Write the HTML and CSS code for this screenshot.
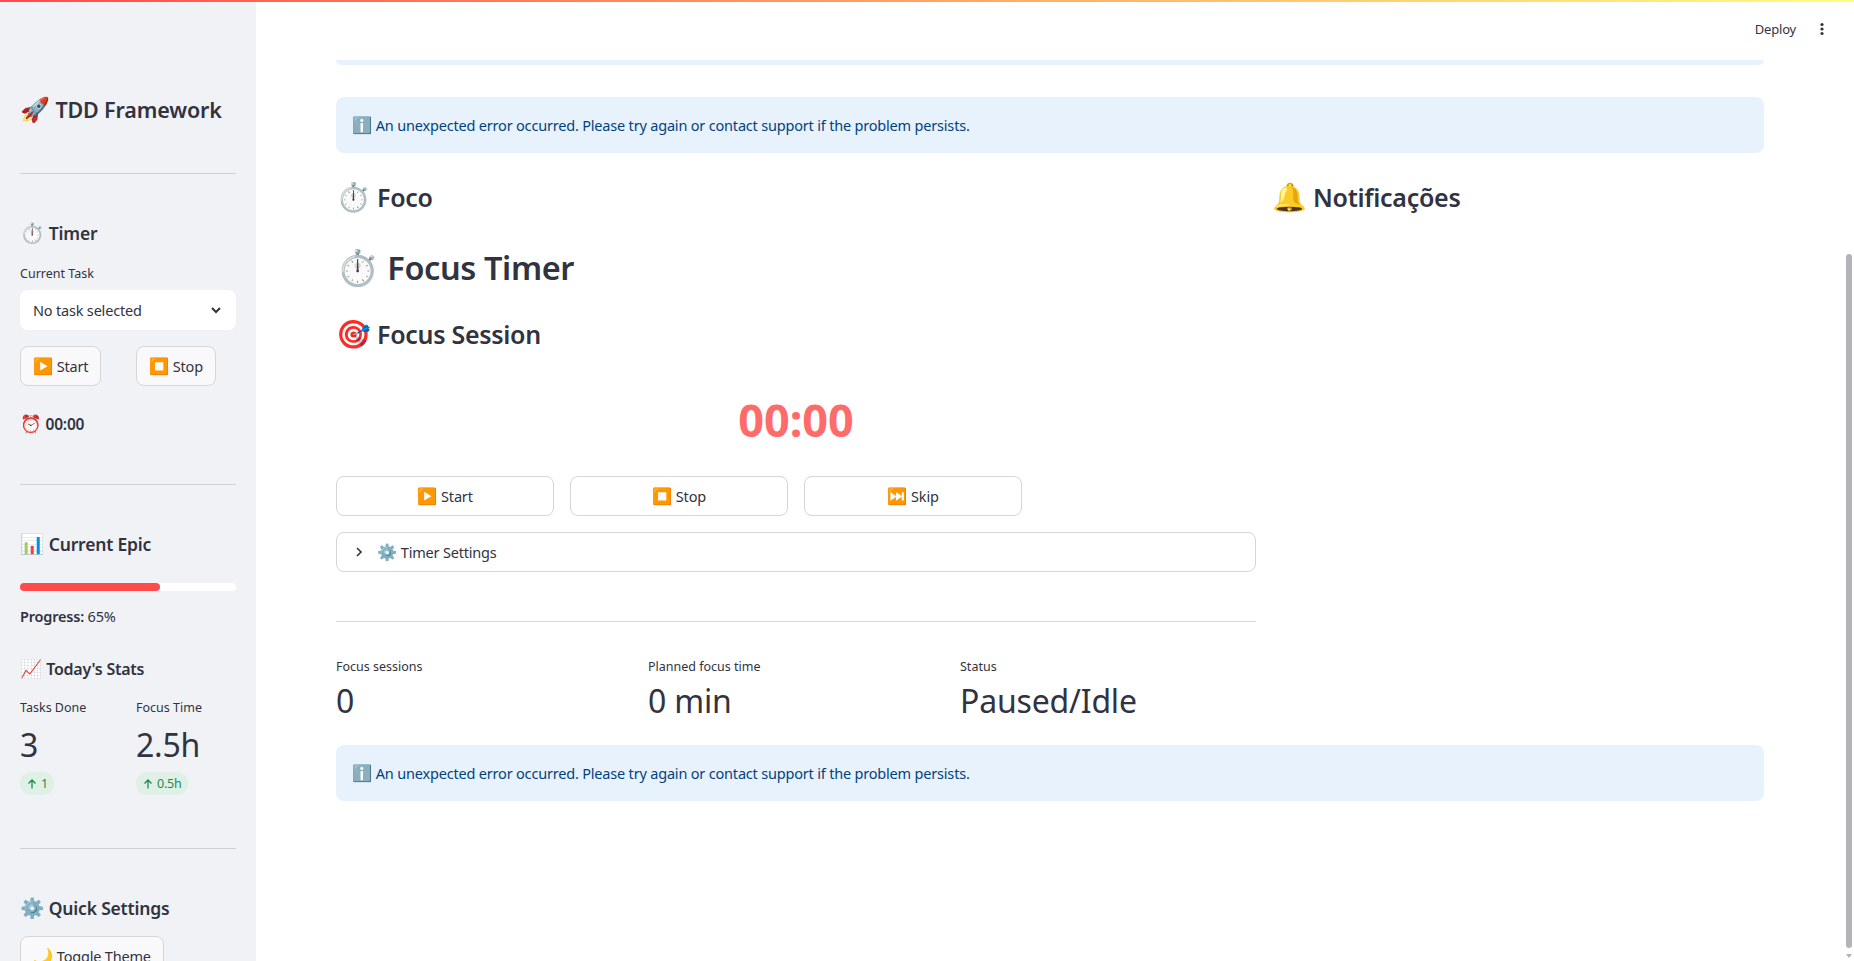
FILE: index.html
```html
<!DOCTYPE html>
<html lang="en">

<head>
  <meta charset="UTF-8" />
  <title>TDD Framework</title>
  <link rel="stylesheet" href="styles.css">
</head>

<body>
  <div class="top-bar"></div>

  <div class="app">
    <aside class="sidebar">
      <h1 class="brand"><span class="emoji">🚀</span> TDD Framework</h1>
      <hr class="rule rule-brand">

      <h3 class="side-title"><span class="emoji">⏱️</span> Timer</h3>
      <div class="field-label">Current Task</div>
      <div class="select">
        <span>No task selected</span>
        <svg class="chevron" width="16" height="16" viewBox="0 0 16 16"><path d="M4 6l4 4 4-4" fill="none" stroke="#31333f" stroke-width="2"/></svg>
      </div>
      <div class="side-buttons">
        <div class="side-col"><button class="btn btn-side"><span class="emoji">▶️</span> Start</button></div>
        <div class="side-col"><button class="btn btn-side"><span class="emoji">⏹️</span> Stop</button></div>
      </div>
      <div class="clock"><span class="emoji">⏰</span> 00:00</div>
      <hr class="rule rule-clock">

      <h3 class="side-title side-title-epic"><span class="emoji">📊</span> Current Epic</h3>
      <div class="progress"><div class="progress-fill" style="width: 65%"></div></div>
      <p class="progress-text"><strong>Progress:</strong> 65%</p>

      <h4 class="side-subtitle"><span class="emoji">📈</span> Today's Stats</h4>
      <div class="side-stats">
        <div class="side-col">
          <div class="stat-label">Tasks Done</div>
          <div class="stat-value">3</div>
          <span class="delta"><svg width="12" height="12" viewBox="0 0 12 12"><path d="M6 10.5V2M2.5 5.5L6 2l3.500 3.500" fill="none" stroke="#1f8a4c" stroke-width="1.300"/></svg>1</span>
        </div>
        <div class="side-col">
          <div class="stat-label">Focus Time</div>
          <div class="stat-value">2.5h</div>
          <span class="delta"><svg width="12" height="12" viewBox="0 0 12 12"><path d="M6 10.5V2M2.5 5.5L6 2l3.500 3.500" fill="none" stroke="#1f8a4c" stroke-width="1.300"/></svg>0.5h</span>
        </div>
      </div>
      <hr class="rule rule-stats">

      <h3 class="side-title side-title-quick"><span class="emoji">⚙️</span> Quick Settings</h3>
      <button class="btn btn-side"><span class="emoji">🌙</span> Toggle Theme</button>
    </aside>

    <main class="main">
      <div class="alert-stub"></div>
      <div class="alert alert-first"><span><span class="emoji">ℹ️</span> An unexpected error occurred. Please try again or contact support if the problem persists.</span></div>

      <div class="columns">
        <section class="col-left">
          <h3 class="page-section"><span class="emoji">⏱️</span> Foco</h3>
          <h1 class="page-title"><span class="emoji">⏱️</span> Focus Timer</h1>
          <h2 class="page-sub"><span class="emoji">🎯</span> Focus Session</h2>
          <div class="big-timer">00:00</div>
          <div class="main-buttons">
            <button class="btn btn-main"><span class="emoji">▶️</span> Start</button>
            <button class="btn btn-main"><span class="emoji">⏹️</span> Stop</button>
            <button class="btn btn-main"><span class="emoji">⏭️</span> Skip</button>
          </div>
          <div class="expander">
            <svg width="16" height="16" viewBox="0 0 16 16"><path d="M6 4l4 4-4 4" fill="none" stroke="#31333f" stroke-width="1.600"/></svg>
            <span><span class="emoji">⚙️</span> Timer Settings</span>
          </div>
          <hr class="rule rule-main">
          <div class="metrics">
            <div>
              <div class="stat-label">Focus sessions</div>
              <div class="metric-value">0</div>
            </div>
            <div>
              <div class="stat-label">Planned focus time</div>
              <div class="metric-value">0 min</div>
            </div>
            <div>
              <div class="stat-label">Status</div>
              <div class="metric-value">Paused/Idle</div>
            </div>
          </div>
        </section>
        <section class="col-right">
          <h3 class="page-section"><span class="emoji">🔔</span> Notificações</h3>
        </section>
      </div>

      <div class="alert alert-last"><span><span class="emoji">ℹ️</span> An unexpected error occurred. Please try again or contact support if the problem persists.</span></div>
    </main>
  </div>

  <div class="toolbar">
    <span class="deploy">Deploy</span>
    <svg width="16" height="16" viewBox="0 0 16 16"><circle cx="8" cy="3.500" r="1.600" fill="#31333f"/><circle cx="8" cy="8" r="1.600" fill="#31333f"/><circle cx="8" cy="12.500" r="1.600" fill="#31333f"/></svg>
  </div>

  <div class="scroll-thumb"></div>
  <div class="scroll-arrow"></div>
</body>

</html>
```

FILE: styles.css
```css
* {
  box-sizing: border-box;
}

html,
body {
  margin: 0;
  height: 100%;
  overflow: hidden;
}

body {
  font-family: "Noto Sans", "Noto Color Emoji", sans-serif;
  font-size: 14.500px;
  letter-spacing: -0.190px;
  color: #31333f;
  background: #fff;
}

.emoji {
  font-size: 1.120em;
  letter-spacing: 0;
}

.top-bar {
  position: absolute;
  top: 0;
  left: 0;
  right: 0;
  height: 2px;
  background: linear-gradient(90deg, #ff4b4b, #fffd80);
}

.app {
  display: flex;
  height: 961px;
  overflow: hidden;
}

.sidebar {
  flex: 0 0 256px;
  padding: 91px 20px 0;
  background: #f0f2f6;
  overflow: hidden;
}

.brand {
  margin: 0;
  font-size: 21.500px;
  letter-spacing: -0.150px;
  line-height: 36px;
  font-weight: 600;
}

.rule {
  border: none;
  border-top: 1px solid #cfd0d5;
  margin: 0;
}

.rule-brand {
  margin-top: 45px;
}

.side-title {
  margin: 45px 0 0;
  font-size: 17.500px;
  line-height: 28px;
  font-weight: 600;
}

.side-title-epic {
  margin-top: 45px;
}

.side-title-quick {
  margin-top: 45px;
  margin-bottom: 14px;
}

.field-label {
  margin-top: 17px;
  font-size: 12.500px;
  letter-spacing: 0;
  line-height: 20px;
}

.select {
  display: flex;
  align-items: center;
  justify-content: space-between;
  height: 40px;
  margin-top: 6px;
  padding: 0 12px 0 13px;
  background: #fff;
  border-radius: 8px;
}

.side-buttons {
  display: flex;
  margin-top: 16px;
}

.side-col {
  flex: 0 0 116px;
}

.side-col:last-child {
  flex: 0 0 100px;
}

.btn {
  height: 40px;
  padding: 0 12px;
  background: #fff;
  border: 1px solid #d5d6da;
  border-radius: 8px;
  font-family: inherit;
  font-size: inherit;
  letter-spacing: inherit;
  color: #31333f;
}

.btn-side {
  background: #f9f9fb;
}

.clock {
  margin-top: 25px;
  font-size: 15.500px;
  font-weight: 600;
  line-height: 24px;
}

.rule-clock {
  margin-top: 48px;
}

.progress {
  height: 8px;
  margin-top: 25px;
  background: #fff;
  border-radius: 4px;
}

.progress-fill {
  height: 100%;
  background: #ff4b4b;
  border-radius: 4px;
}

.progress-text {
  margin: 13px 0 0;
  line-height: 24px;
}

.progress-text strong {
  font-weight: 600;
}

.side-subtitle {
  margin: 28px 0 0;
  font-size: 16px;
  letter-spacing: -0.250px;
  line-height: 24px;
  font-weight: 600;
}

.side-stats {
  display: flex;
  margin-top: 17px;
}

.stat-label {
  font-size: 12.500px;
  letter-spacing: 0;
  line-height: 20px;
}

.stat-value {
  margin-top: 5px;
  font-size: 32px;
  line-height: 44px;
}

.delta {
  display: inline-flex;
  align-items: center;
  gap: 3px;
  height: 23px;
  margin-top: 5px;
  padding: 0 6px;
  background: #dff0e7;
  border-radius: 12px;
  font-size: 12.500px;
  color: #1f8a4c;
}

.rule-stats {
  margin-top: 53px;
}

.main {
  flex: 1;
  padding: 60px 90px 0 80px;
}

.alert-stub {
  height: 5px;
  background: #e8f2fc;
  border-radius: 0 0 5px 5px;
}

.alert {
  height: 56px;
  padding: 0 16px;
  display: flex;
  align-items: center;
  background: #e8f2fc;
  border-radius: 8px;
  color: #004280;
}

.alert-first {
  margin-top: 32px;
}

.alert-last {
  margin-top: 22px;
}

.columns {
  display: flex;
  gap: 16px;
}

.col-left {
  flex: 0 0 920px;
  min-width: 0;
}

.col-right {
  flex: 1;
}

.page-section {
  margin: 25px 0 0;
  font-size: 25px;
  letter-spacing: -0.300px;
  line-height: 36px;
  font-weight: 600;
}

.page-title {
  margin: 29px 0 0;
  font-size: 32.500px;
  letter-spacing: -0.400px;
  line-height: 46px;
  font-weight: 600;
}

.page-title .emoji {
  font-size: 1.070em;
}

.page-sub {
  margin: 24px 0 0;
  font-size: 25px;
  letter-spacing: -0.300px;
  line-height: 36px;
  font-weight: 600;
}

.big-timer {
  margin-top: 38px;
  text-align: center;
  font-size: 45px;
  letter-spacing: 0;
  line-height: 60px;
  font-weight: 700;
  color: #ff6b6b;
}

.main-buttons {
  display: flex;
  gap: 16px;
  margin-top: 26px;
}

.btn-main {
  width: 218px;
}

.expander {
  display: flex;
  align-items: center;
  gap: 10px;
  height: 40px;
  margin-top: 16px;
  padding: 0 14px;
  border: 1px solid #d5d6da;
  border-radius: 8px;
}

.rule-main {
  margin-top: 49px;
  border-top-color: #d5d6da;
}

.metrics {
  display: grid;
  grid-template-columns: repeat(3, 1fr);
  gap: 16px;
  margin-top: 35px;
}

.metric-value {
  margin-top: 2px;
  font-size: 32px;
  line-height: 44px;
}

.toolbar {
  position: absolute;
  top: 20px;
  right: 24px;
  display: flex;
  align-items: center;
  gap: 18px;
  font-size: 13px;
}

.scroll-thumb {
  position: absolute;
  top: 254px;
  right: 2px;
  width: 6px;
  height: 694px;
  background: #b3b3b8;
  border-radius: 3px;
}

.scroll-arrow {
  position: absolute;
  top: 954px;
  right: 2px;
  border-left: 3px solid transparent;
  border-right: 3px solid transparent;
  border-top: 4px solid #b3b3b8;
}
```
